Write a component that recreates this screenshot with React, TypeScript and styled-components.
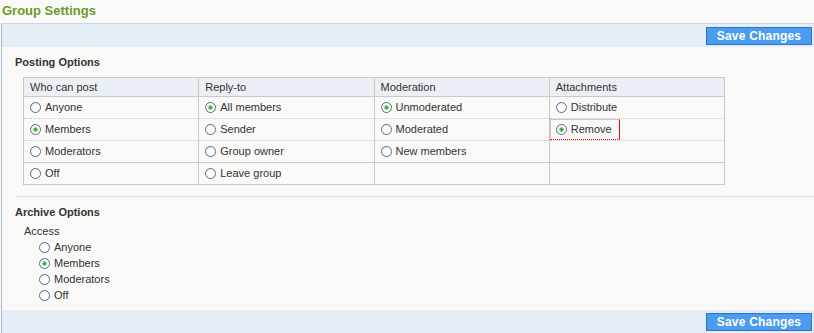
import React from 'react';
import styled, { createGlobalStyle } from 'styled-components';

const GlobalStyle = createGlobalStyle`
  html, body {
    margin: 0;
    padding: 0;
    background: #f9f9f7;
    font-family: "Liberation Sans", Arial, sans-serif;
    font-size: 11px;
    color: #333;
  }
`;

const Page = styled.div`
  width: 814px;
  height: 333px;
  overflow: hidden;
`;

const Title = styled.h1`
  margin: 0;
  padding: 3px 0 0 2px;
  height: 23px;
  box-sizing: border-box;
  font-size: 13px;
  font-weight: bold;
  color: #6b9b2c;
`;

const Panel = styled.div`
  margin-left: 1px;
  border-left: 1px solid #a9bccf;
  border-top: 1px solid #c6d6e6;
  background: #f9f9f7;
`;

const Bar = styled.div`
  height: 23px;
  background: #e5edf7;
  display: flex;
  justify-content: flex-end;
  align-items: center;
  padding-right: 2px;
`;

const SaveButton = styled.button`
  width: 106px;
  height: 18px;
  padding: 0;
  background: #4a9cef;
  border: 1px dotted #1c4fa8;
  outline: 1px solid #3170c8;
  outline-offset: -1px;
  color: #fff;
  font-family: "Liberation Sans", Arial, sans-serif;
  font-size: 12px;
  font-weight: bold;
  letter-spacing: 0.2px;
`;

const Body = styled.div`
  padding: 8px 0 0 13px;
`;

const SectionTitle = styled.div<{ $gap?: number }>`
  font-weight: bold;
  color: #333;
  height: 15px;
  line-height: 15px;
  margin-top: ${p => p.$gap ?? 0}px;
`;

const Table = styled.table`
  margin: 7px 0 0 8px;
  border-collapse: collapse;
  width: 702px;
  table-layout: fixed;
`;

const HeadCell = styled.th`
  background: #ebf0f6;
  border: 1px solid #c9c9c9;
  font-weight: normal;
  text-align: left;
  height: 18px;
  padding: 0 0 0 6px;
  color: #333;
`;

const Cell = styled.td<{ $solid?: boolean }>`
  border-left: 1px solid #c9c9c9;
  border-right: 1px solid #c9c9c9;
  border-bottom: 1px ${p => (p.$solid ? 'solid' : 'dotted')} #c9c9c9;
  height: 21px;
  padding: 0;
  vertical-align: middle;
`;

const RadioLabel = styled.label<{ $pad: number }>`
  display: flex;
  align-items: center;
  gap: 4px;
  height: 100%;
  box-sizing: border-box;
  padding-left: ${p => p.$pad}px;
  line-height: 13px;
  color: #333;
`;

// keyboard focus box around the selected attachment option
const FocusBox = styled.div`
  width: fit-content;
  height: 21px;
  box-sizing: border-box;
  padding-right: 7px;
  border-left: 1px solid #c4c4c4;
  border-top: 1px solid #c4c4c4;
  border-right: 1px solid #ff0000;
  border-bottom: 1px dotted #ff0000;
  ${RadioLabel} {
    padding-left: 5px;
  }
`;

const Circle = styled.span<{ $on?: boolean }>`
  flex: 0 0 11px;
  width: 11px;
  height: 11px;
  box-sizing: border-box;
  border-radius: 50%;
  border: 1px solid #4f6f92;
  background: radial-gradient(circle at 60% 60%, #ffffff 40%, #dfe6ee 100%);
  position: relative;
  &::after {
    content: '';
    position: absolute;
    left: 3px;
    top: 3px;
    display: ${p => (p.$on ? 'block' : 'none')};
    width: 3px;
    height: 3px;
    border-radius: 50%;
    background: #2ea82e;
    box-shadow: 0 0 0 1px #9ad49a;
  }
`;

const Divider = styled.div`
  height: 1px;
  background: #d3e0ec;
  margin: 11px 0 0 0;
`;

const AccessLabel = styled.div`
  margin: 4px 0 0 9px;
  height: 14px;
  line-height: 14px;
`;

const AccessList = styled.div`
  display: flex;
  flex-direction: column;
  margin: 1px 0 0 24px;
  padding-bottom: 7px;
`;

const AccessItem = styled.div`
  height: 16px;
  display: flex;
  align-items: center;
`;

type Opt = { label: string; on?: boolean; focused?: boolean };

const Radio = ({ label, on, focused, pad = 0 }: Opt & { pad?: number }) => {
  const radio = (
    <RadioLabel $pad={pad}>
      <Circle $on={on} />
      {label}
    </RadioLabel>
  );
  return focused ? <FocusBox>{radio}</FocusBox> : radio;
};

const columns: { head: string; opts: Opt[] }[] = [
  {
    head: 'Who can post',
    opts: [{ label: 'Anyone' }, { label: 'Members', on: true }, { label: 'Moderators' }, { label: 'Off' }],
  },
  {
    head: 'Reply-to',
    opts: [{ label: 'All members', on: true }, { label: 'Sender' }, { label: 'Group owner' }, { label: 'Leave group' }],
  },
  {
    head: 'Moderation',
    opts: [{ label: 'Unmoderated', on: true }, { label: 'Moderated' }, { label: 'New members' }],
  },
  {
    head: 'Attachments',
    opts: [{ label: 'Distribute' }, { label: 'Remove', on: true, focused: true }],
  },
];

const archive: Opt[] = [{ label: 'Anyone' }, { label: 'Members', on: true }, { label: 'Moderators' }, { label: 'Off' }];

export default function App() {
  const rows = [0, 1, 2, 3];
  return (
    <Page>
      <GlobalStyle />
      <Title>Group Settings</Title>
      <Panel>
        <Bar>
          <SaveButton>Save Changes</SaveButton>
        </Bar>
        <Body>
          <SectionTitle>Posting Options</SectionTitle>
          <Table>
            <thead>
              <tr>
                {columns.map(c => (
                  <HeadCell key={c.head}>{c.head}</HeadCell>
                ))}
              </tr>
            </thead>
            <tbody>
              {rows.map(r => (
                <tr key={r}>
                  {columns.map(c => (
                    <Cell key={c.head} $solid={r >= 2}>
                      {c.opts[r] ? <Radio {...c.opts[r]} pad={6} /> : null}
                    </Cell>
                  ))}
                </tr>
              ))}
            </tbody>
          </Table>
          <Divider />
          <SectionTitle $gap={8}>Archive Options</SectionTitle>
          <AccessLabel>Access</AccessLabel>
          <AccessList>
            {archive.map(o => (
              <AccessItem key={o.label}>
                <Radio {...o} />
              </AccessItem>
            ))}
          </AccessList>
        </Body>
        <Bar>
          <SaveButton>Save Changes</SaveButton>
        </Bar>
      </Panel>
    </Page>
  );
}
